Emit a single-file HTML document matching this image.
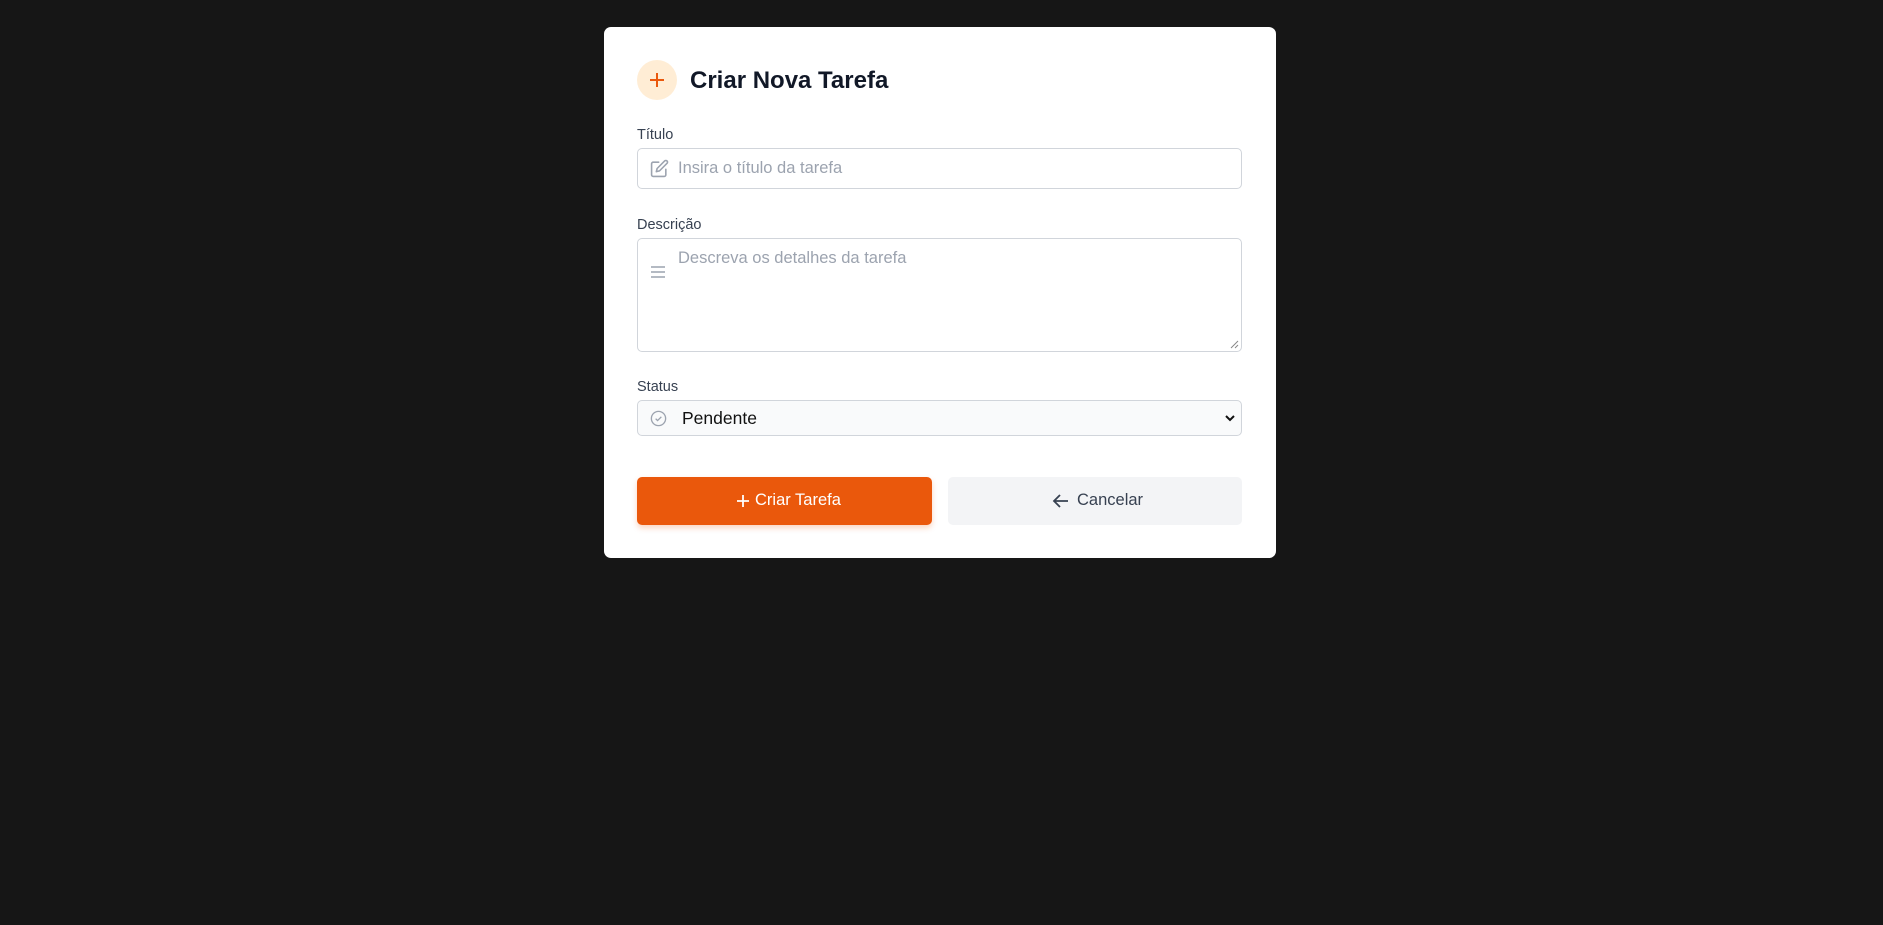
<!DOCTYPE html>
<html><head><meta charset="utf-8"><style>
*{box-sizing:border-box;margin:0;padding:0}
body{width:1883px;height:925px;background:#161616;font-family:"Liberation Sans",sans-serif;position:relative;overflow:hidden}
.card{position:absolute;left:604px;top:27px;width:672px;height:531px;background:#fff;border-radius:7px}
.abs{position:absolute}
.lbl{position:absolute;left:33px;font-size:14.5px;color:#374151}
.box{position:absolute;left:33px;width:605px;border:1px solid #d1d5db;border-radius:5px;background:#fff}
.ph{position:absolute;font-size:16.5px;color:#9ca3af}
</style></head><body>
<div class="card">
  <div class="abs" style="left:33px;top:33px;width:40px;height:40px;border-radius:50%;background:#ffedd5"></div>
  <svg class="abs" style="left:43px;top:43px" width="20" height="20" viewBox="0 0 20 20"><path d="M10 3v14M3 10h14" stroke="#ea580c" stroke-width="2"/></svg>
  <div class="abs" style="left:86px;top:40px;font-size:24px;font-weight:bold;color:#111827">Criar Nova Tarefa</div>

  <div class="lbl" style="top:100px">Título</div>
  <div class="box" style="top:121px;height:41px"></div>
  <svg class="abs" style="left:46px;top:132px" width="19" height="19" viewBox="0 0 24 24" fill="none" stroke="#9ca3af" stroke-width="2" stroke-linecap="round" stroke-linejoin="round"><path d="M11 4H4a2 2 0 0 0-2 2v14a2 2 0 0 0 2 2h14a2 2 0 0 0 2-2v-7"/><path d="M18.5 2.5a2.1 2.1 0 0 1 3 3L12 15l-4 1 1-4 9.5-9.5z"/></svg>
  <div class="ph" style="left:74px;top:132px">Insira o título da tarefa</div>

  <div class="lbl" style="top:190px">Descrição</div>
  <div class="box" style="top:211px;height:114px"></div>
  <svg class="abs" style="left:46px;top:238px" width="16" height="14" viewBox="0 0 16 14"><path d="M1 2h14M1 7h14M1 12h14" stroke="#9ca3af" stroke-width="1.6"/></svg>
  <div class="ph" style="left:74px;top:222px">Descreva os detalhes da tarefa</div>
  <svg class="abs" style="left:626px;top:313px" width="9" height="9" viewBox="0 0 9 9"><path d="M8 1L1 8M8 5L5 8" stroke="#888" stroke-width="1"/></svg>

  <div class="lbl" style="top:352px">Status</div>
  <div class="box" style="top:373px;height:36px;background:#f9fafb"></div>
  <svg class="abs" style="left:45px;top:382px" width="19" height="19" viewBox="0 0 20 20" fill="none" stroke="#9ca3af" stroke-width="1.4"><circle cx="10" cy="10" r="7.5"/><path d="M7 10.2l2 2 4-4"/></svg>
  <div class="abs" style="left:78px;top:381px;font-size:17.5px;color:#111">Pendente</div>
  <svg class="abs" style="left:620px;top:387px" width="12" height="9" viewBox="0 0 12 9"><path d="M2 2l4 4 4-4" stroke="#111" stroke-width="2" fill="none"/></svg>

  <div class="abs" style="left:33px;top:450px;width:295px;height:48px;background:#ea580c;border-radius:5px;box-shadow:0 3px 6px rgba(234,88,12,.25)"></div>
  <svg class="abs" style="left:131px;top:466px" width="16" height="16" viewBox="0 0 16 16"><path d="M8 2v12M2 8h12" stroke="#fff" stroke-width="1.8"/></svg>
  <div class="abs" style="left:151px;top:464px;font-size:16.5px;color:#fff">Criar Tarefa</div>

  <div class="abs" style="left:344px;top:450px;width:294px;height:48px;background:#f3f4f6;border-radius:5px"></div>
  <svg class="abs" style="left:448px;top:466px" width="18" height="16" viewBox="0 0 18 16"><path d="M16 8H2M8 2L2 8l6 6" stroke="#374151" stroke-width="1.8" fill="none"/></svg>
  <div class="abs" style="left:473px;top:464px;font-size:16.5px;color:#374151">Cancelar</div>
</div>
</body></html>
